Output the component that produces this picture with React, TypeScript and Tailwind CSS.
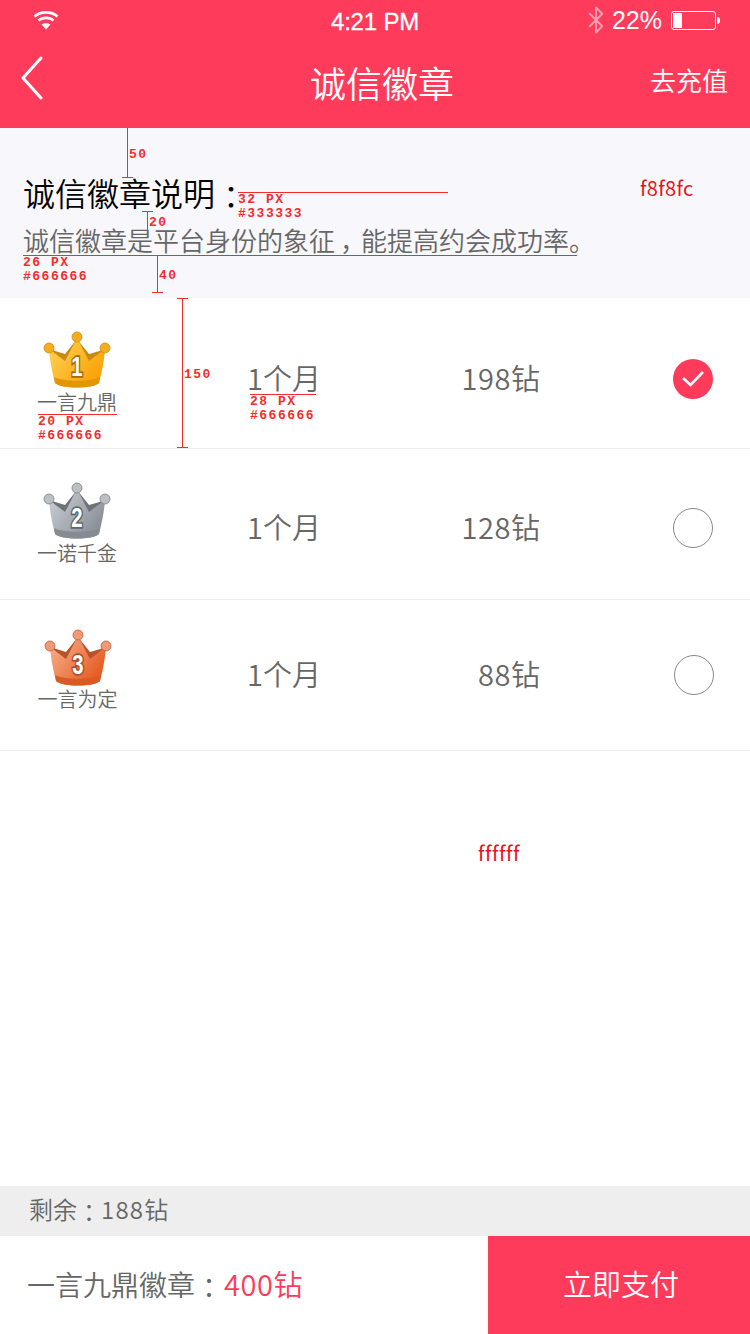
import { Bluetooth } from "lucide-react"

const plans = [
  { id: 1, name: "一言九鼎", price: "198", checked: true, top: "pt-[33px]", left: "pl-0", label: "-mt-px", text: "pt-[59px]", check: "mt-[61px]", right: "pl-[133px]", c1: "#ffd55a", c2: "#fb9f05", band: "#e39505", back: "#c98a14", ball: "#f5ad20", edge: "#d68a0a", numEdge: "#a9690a" },
  { id: 2, name: "一诺千金", price: "128", checked: false, top: "pt-[33px]", left: "pl-0", label: "-mt-px", text: "pt-[57px]", check: "mt-[59px]", right: "pl-[133px]", c1: "#d0d4d9", c2: "#878d94", band: "#868b92", back: "#6d7278", ball: "#bcc0c6", edge: "#7b8087", numEdge: "#5f656c" },
  { id: 3, name: "一言为定", price: "88", checked: false, top: "pt-[29px]", left: "pl-px", label: "-mt-[2px]", text: "pt-[53px]", check: "mt-[55px]", right: "pl-[134px]", c1: "#f9b796", c2: "#e4571d", band: "#d95a22", back: "#b5532b", ball: "#ee9a78", edge: "#c65a30", numEdge: "#a94f2c" },
]

type CrownProps = { id: number; c1: string; c2: string; band: string; back: string; ball: string; edge: string; numEdge: string }

function Crown({ id, c1, c2, band, back, ball, edge, numEdge }: CrownProps) {
  const gradientId = `crown-${id}`
  return (
    <svg width="68" height="58" viewBox="0 0 68 58">
      <defs>
        <linearGradient id={gradientId} x1="0" y1="0" x2="1" y2="0.7">
          <stop offset="0" stopColor={c1} />
          <stop offset="1" stopColor={c2} />
        </linearGradient>
      </defs>
      <path d="M9 19 L22 23 L34 8 L46 23 L60 19 L50 36 L18 36 Z" fill={back} />
      <path d="M6 18 L22 30 L34 7 L46 30 L62 18 C61 32 58 44 56 52 C50 58 18 58 12 52 C10 44 7 32 6 18 Z" fill={`url(#${gradientId})`} />
      <path d="M11 46 C20 51 48 51 57 46 L56 52 C50 58 18 58 12 52 Z" fill={band} />
      <circle cx="34" cy="6" r="5" fill={ball} stroke={edge} strokeWidth="0.8" />
      <circle cx="6" cy="17" r="5" fill={ball} stroke={edge} strokeWidth="0.8" />
      <circle cx="62" cy="17" r="5" fill={ball} stroke={edge} strokeWidth="0.8" />
      <text transform="translate(34 45) scale(0.78 1.08)" textAnchor="middle" fontFamily="Liberation Sans" fontWeight="700" fontSize="26" fill="#fff" stroke={numEdge} strokeWidth="3.2" paintOrder="stroke">
        {id}
      </text>
    </svg>
  )
}

// measured text note: a rule with the spec lines stacked beneath it
function Note({ className, lines }: { className: string; lines: string[] }) {
  return (
    <div className={`absolute border-t border-[#f52c2c] flex flex-col text-[#f52c2c] font-['Liberation_Mono',monospace] font-bold text-[13px] leading-[14px] tracking-[1.5px] whitespace-nowrap ${className}`}>
      {lines.map((line) => (
        <span key={line}>{line}</span>
      ))}
    </div>
  )
}

// spacing marker: a vertical line with a value beside it
function Gap({ className, value }: { className: string; value: string }) {
  return (
    <div className={`absolute border-l border-[#f52c2c] pl-px pt-[4px] flex items-center text-[#f52c2c] font-['Liberation_Mono',monospace] font-bold text-[13px] tracking-[1.5px] ${className}`}>
      {value}
    </div>
  )
}

function Colon() {
  return <span className="relative top-[3px] font-['Noto_Sans_CJK_TC',sans-serif]">：</span>
}

export default function App() {
  return (
    <div className="relative w-[750px] h-[1334px] overflow-hidden bg-white flex flex-col font-['Noto_Sans_CJK_SC',sans-serif] font-[350] text-[#666666]">
      <header className="h-[128px] bg-[#ff3b5c] text-white shrink-0 flex flex-col">
        <div className="h-[40px] pl-[33px] pr-[30px] grid grid-cols-[260px_1fr_auto] items-center font-['Liberation_Sans',sans-serif] font-normal">
          <svg width="26" height="20" viewBox="0 0 26 20" fill="none" stroke="#fff" strokeWidth="2.6">
            <path d="M1.5 6.5 C7.5 1 18.5 1 24.5 6.5" />
            <path d="M5.5 10.5 C9.5 7 16.5 7 20.5 10.5" />
            <path d="M13 19.5 L8.6 14.6 C11 12.7 15 12.7 17.4 14.6 Z" fill="#fff" stroke="none" />
          </svg>
          <span className="mt-[4px] ml-[38px] text-[24px] leading-[30px] tracking-[-0.2px] [-webkit-text-stroke:0.3px_#fff]">4:21 PM</span>
          <div className="flex items-center">
            <Bluetooth className="opacity-50 -mr-[1px]" size={30} strokeWidth={1.6} />
            <span className="ml-[2px] text-[25px] leading-[30px]">22%</span>
            <div className="ml-[9px] w-[45px] h-[19px] rounded-[3px] border border-white p-px">
              <div className="w-[9px] h-full bg-white" />
            </div>
            <div className="ml-px w-[3px] h-[7px] rounded-r-full bg-white" />
          </div>
        </div>
        <div className="flex-1 pl-[20px] pr-[22px] pb-[4px] grid grid-cols-[1fr_auto_1fr] items-center">
          <svg className="-translate-y-[4px]" width="24" height="44" viewBox="0 0 24 44" fill="none" stroke="#fff" strokeWidth="3" strokeLinecap="round" strokeLinejoin="round">
            <path d="M21 2 L3 22 L21 42" />
          </svg>
          <h1 className="translate-x-[8px] text-[36px] leading-[50px] font-[350]">诚信徽章</h1>
          <span className="justify-self-end -translate-y-[2px] text-[26px] leading-[36px]">去充值</span>
        </div>
      </header>

      <section className="h-[170px] bg-[#f8f8fc] pt-[44px] pl-[23px] shrink-0">
        <h2 className="text-[32px] leading-[40px] text-black font-[350]">诚信徽章说明<Colon /></h2>
        <p className="mt-[8px] text-[26px] leading-[40px] whitespace-nowrap">诚信徽章是平台身份的象征<span className="relative left-[5px]">，</span>能提高约会成功率。</p>
      </section>

      {plans.map((plan) => (
        <div key={plan.id} className="h-[151px] border-b border-[#eeeeee] flex shrink-0">
          <div className={`w-[154px] flex flex-col items-center ${plan.top}`}>
            <div className={plan.left}><Crown {...plan} /></div>
            <span className={`${plan.left} ${plan.label} text-[20px] leading-[28px]`}>{plan.name}</span>
          </div>
          <div className={`w-[166px] pl-[93px] text-[29px] leading-[40px] whitespace-nowrap ${plan.text}`}>1个月</div>
          <div className={`w-[220px] text-[29px] leading-[40px] text-right whitespace-nowrap ${plan.text}`}>
            <span className="tracking-[0.6px]">{plan.price}</span>钻
          </div>
          <div className={plan.right}>
            <div className={`${plan.check} w-[40px] h-[40px] rounded-full ${plan.checked ? "bg-[#ff3b5c]" : "border border-[#888888]"} flex items-center justify-center`}>
              {plan.checked && (
                <svg width="24" height="18" viewBox="0 0 24 18" fill="none" stroke="#fff" strokeWidth="2.6">
                  <path d="M2 8 L9.5 15 L22 2" />
                </svg>
              )}
            </div>
          </div>
        </div>
      ))}

      <div className="flex-1 pt-[88px] pl-[478px]">
        <span className="text-[#e8141c] font-normal text-[20px] leading-[28px] tracking-[0.5px]">ffffff</span>
      </div>

      <div className="h-[50px] bg-[#eeeeee] pl-[29px] pb-[5px] flex items-center text-[24px] shrink-0">
        剩余<Colon /><span className="tracking-[1.2px]">188</span>钻
      </div>
      <div className="h-[98px] flex shrink-0">
        <div className="w-[488px] pl-[27px] pb-[2px] flex items-center text-[28px]">
          一言九鼎徽章<Colon /><span className="ml-px text-[29px] text-[#ff3b5c]"><span className="tracking-[0.6px]">400</span>钻</span>
        </div>
        <button className="flex-1 bg-[#ff3b5c] text-white text-[29px] pb-[2px] pl-[4px]">立即支付</button>
      </div>

      {/* design annotations baked into the mockup, they sit over the page */}
      <Gap className="left-[127px] top-[128px] h-[49px]" value="50" />
      <Note className="left-[122px] top-[177px] w-[11px]" lines={[]} />
      <Note className="left-[238px] top-[192px] w-[210px]" lines={["32 PX", "#333333"]} />
      <Gap className="left-[147px] top-[211px] h-[20px]" value="20" />
      <Note className="left-[142px] top-[211px] w-[11px]" lines={[]} />
      <Note className="left-[23px] top-[255px] w-[554px]" lines={["26 PX", "#666666"]} />
      <Gap className="left-[157px] top-[255px] h-[37px]" value="40" />
      <Note className="left-[152px] top-[292px] w-[11px]" lines={[]} />
      <div className="absolute left-[640px] top-[174px] text-[#e8141c] font-normal text-[20px] leading-[28px] tracking-[0.3px]">f8f8fc</div>
      <Gap className="left-[182px] top-[298px] h-[150px]" value="150" />
      <Note className="left-[177px] top-[298px] w-[11px]" lines={[]} />
      <Note className="left-[177px] top-[447px] w-[11px]" lines={[]} />
      <Note className="left-[38px] top-[414px] w-[79px]" lines={["20 PX", "#666666"]} />
      <Note className="left-[250px] top-[394px] w-[66px]" lines={["28 PX", "#666666"]} />
    </div>
  )
}
